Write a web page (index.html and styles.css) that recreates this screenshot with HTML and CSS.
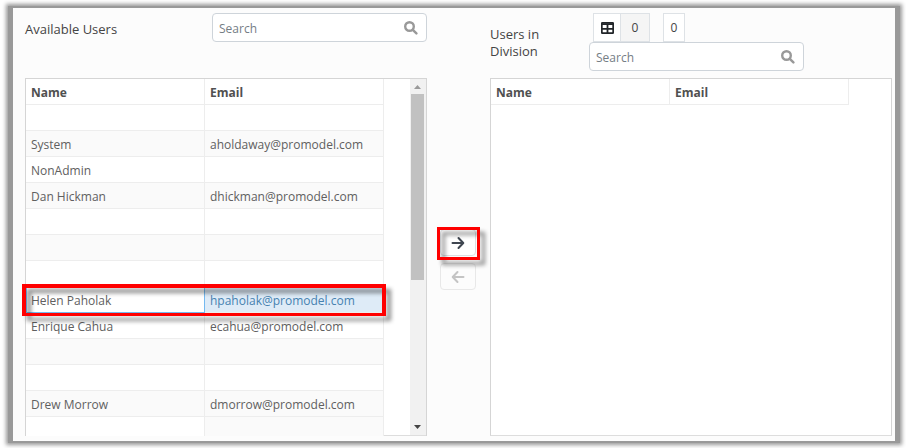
FILE: index.html
```html
<!DOCTYPE html>
<html lang="en">
<head>
<meta charset="utf-8">
<title>Division users</title>
<link rel="stylesheet" href="styles.css">
</head>
<body>
<div class="frame">
<main class="panel">
  <section class="side">
    <header class="head">
      <h2 class="title">Available Users</h2>
      <div class="search">
        <input type="search" placeholder="Search" aria-label="Search available users">
        <svg viewBox="0 0 14 14" aria-hidden="true"><circle cx="5.5" cy="5.5" r="4.3"/><path d="M8.8 8.8L12.4 12.4"/></svg>
      </div>
    </header>
    <div class="list">
      <table class="grid">
        <thead><tr><th>Name</th><th>Email</th></tr></thead>
        <tbody>
          <tr><td></td><td></td></tr>
          <tr><td>System</td><td>aholdaway@promodel.com</td></tr>
          <tr><td>NonAdmin</td><td></td></tr>
          <tr><td>Dan Hickman</td><td>dhickman@promodel.com</td></tr>
          <tr><td></td><td></td></tr>
          <tr><td></td><td></td></tr>
          <tr><td></td><td></td></tr>
          <tr class="selected"><td class="focused">Helen Paholak</td><td>hpaholak@promodel.com<span class="mark mark-row"></span></td></tr>
          <tr><td>Enrique Cahua</td><td>ecahua@promodel.com</td></tr>
          <tr><td></td><td></td></tr>
          <tr><td></td><td></td></tr>
          <tr><td>Drew Morrow</td><td>dmorrow@promodel.com</td></tr>
          <tr class="partial"><td></td><td></td></tr>
        </tbody>
      </table>
      <div class="spare"></div>
      <div class="scroll">
        <svg class="up" viewBox="0 0 15 15" aria-hidden="true"><path d="M4 10L7.500 6L11 10Z"/></svg>
        <div class="thumb"></div>
        <svg class="down" viewBox="0 0 15 15" aria-hidden="true"><path d="M4 5L11 5L7.500 9Z"/></svg>
      </div>
    </div>
  </section>

  <div class="moves">
    <div class="move-wrap">
      <button class="move" type="button" aria-label="Add to division"><svg viewBox="0 0 14 14" aria-hidden="true"><path d="M1.500 7H12M7.500 2L12.300 7L7.500 12"/></svg></button>
      <span class="mark mark-button"></span>
    </div>
    <button class="move" type="button" disabled aria-label="Remove from division"><svg viewBox="0 0 14 14" aria-hidden="true"><path d="M12.500 7H2M6.500 2L1.700 7L6.500 12"/></svg></button>
  </div>

  <section class="side">
    <header class="head head-division">
      <h2 class="title">Users in Division</h2>
      <div class="tools">
        <div class="counts">
          <div class="group">
            <button class="table-btn" type="button" aria-label="Show table"><svg viewBox="0 0 13 12" aria-hidden="true"><rect x=".8" y=".8" width="11.400" height="10.400" rx="1"/><path d="M1 2.200H12M1 6.800H12M6.500 3V11"/></svg></button>
            <span class="total">0</span>
          </div>
          <span class="count">0</span>
        </div>
        <div class="search">
          <input type="search" placeholder="Search" aria-label="Search users in division">
          <svg viewBox="0 0 14 14" aria-hidden="true"><circle cx="5.5" cy="5.5" r="4.3"/><path d="M8.8 8.8L12.4 12.4"/></svg>
        </div>
      </div>
    </header>
    <div class="list list-empty">
      <table class="grid">
        <thead><tr><th>Name</th><th>Email</th></tr></thead>
      </table>
    </div>
  </section>
</main>
</div>
</body>
</html>
```
FILE: styles.css
```css
* { box-sizing: border-box; }

body {
  margin: 0;
  padding: 6px 6px 5px 8px;
  background: #fff;
  color: #606060;
  font: 12px/18px "Open Sans", "Noto Sans", sans-serif;
}

.frame {
  padding: 2px 5px;
  background: #999;
  box-shadow: 0 0 4px 2px #999;
}

.panel {
  display: grid;
  grid-template-columns: 1fr 63px 1fr;
  padding: 0 3px 5px 12px;
  background: #fcfcfc;
}

.side {
  display: flex;
  flex-direction: column;
  min-width: 0;
}

.head {
  display: flex;
  justify-content: space-between;
  align-items: flex-start;
  height: 70px;
  padding-top: 5px;
}

.title {
  margin: 0;
  padding-top: 8px;
  color: #444;
  font-size: 13px;
  font-weight: 400;
  line-height: 17px;
}

.head-division { justify-content: flex-start; }
.head-division .title {
  width: 99px;
  padding: 13px 36px 0 0;
}

.search {
  display: flex;
  align-items: center;
  width: 215px;
  height: 29px;
  padding: 0 8px 0 6px;
  background: #fff;
  border: 1px solid #ced4da;
  border-radius: 4px;
}

.search input {
  flex: 1;
  min-width: 0;
  padding: 2px 0 0;
  border: 0;
  outline: 0;
  background: none;
  color: #444;
  font: inherit;
}

.search input::placeholder { color: #757d85; opacity: 1; }

.search svg {
  width: 14px;
  height: 14px;
  fill: none;
  stroke: #999;
  stroke-width: 2.4;
  stroke-linecap: round;
}

.counts {
  display: flex;
  gap: 13px;
  height: 29px;
  padding-left: 4px;
}

.group { display: flex; }

.table-btn, .total, .count {
  display: flex;
  align-items: center;
  justify-content: center;
  border: 1px solid #dee2e6;
  background: #fff;
  color: #444;
}

.table-btn { width: 27px; padding: 0; border-right: 0; }
.table-btn svg {
  width: 13px;
  height: 12px;
  fill: none;
  stroke: #212529;
  stroke-width: 1.8;
}
.total { width: 30px; background: #f5f5f5; }
.count { width: 22px; padding-top: 1px; }

.list {
  display: flex;
  flex: 1;
  background: #fff;
  border: 1px solid #d5d5d5;
  border-bottom: 0;
}

.list-empty {
  align-items: flex-start;
  border-bottom: 1px solid #ddd;
}

.grid {
  width: 358px;
  table-layout: fixed;
  border-collapse: separate;
  border-spacing: 0;
}

.grid th, .grid td {
  position: relative;
  height: 26px;
  padding: 3px 5px 0;
  border-right: 1px solid #ededed;
  border-bottom: 1px solid #ededed;
  text-align: left;
  white-space: nowrap;
}

.grid th { color: #505050; font-weight: 700; }
.grid tbody tr:nth-child(even) { background: #fafafa; }

.grid .selected td:last-child { background: #deebf7; color: #4682b0; }
.grid .focused { background: #fff; border: 1px solid #74b9f0; padding: 2px 4px 0; }

.grid .partial td { height: 19px; border-bottom: 0; }
.grid .partial td:last-child { background: #fafafa; }

.spare { flex: 1; border-bottom: 1px solid #ddd; }

.scroll {
  display: flex;
  flex-direction: column;
  width: 16px;
  background: #f1f1f1;
  border-bottom: 1px solid #ddd;
}

.scroll svg { width: 15px; height: 15px; }
.up { fill: #999; }
.down { margin-top: auto; fill: #444; }
.thumb { height: 186px; margin: 0 2px 0 1px; background: #c1c1c1; }

.moves {
  display: flex;
  flex-direction: column;
  align-items: flex-start;
  gap: 7px;
  padding: 221px 0 0 13px;
}

.move-wrap { position: relative; }

.move {
  display: flex;
  align-items: center;
  justify-content: center;
  width: 36px;
  height: 27px;
  padding: 0;
  background: #fff;
  border: 1px solid #dcdfe2;
  border-radius: 4px;
}

.move svg {
  width: 14px;
  height: 14px;
  fill: none;
  stroke: #3f4650;
  stroke-width: 2;
  stroke-linecap: round;
  stroke-linejoin: round;
}

.move:disabled { background: #fcfcfc; border-color: #e8e8e8; }
.move:disabled svg { stroke: #c4c4c4; }

/* Red callouts laid over the controls they point out */
.mark {
  position: absolute;
  z-index: 1;
  border: 4px solid #f00;
  filter: drop-shadow(5px 5px 2px rgba(0, 0, 0, .45));
  pointer-events: none;
}

.mark-row { inset: -3px -3px -4px -183px; border-bottom-width: 3px; }
.mark-button { inset: -2px -4px -4px -3px; border-width: 3px; }
```
